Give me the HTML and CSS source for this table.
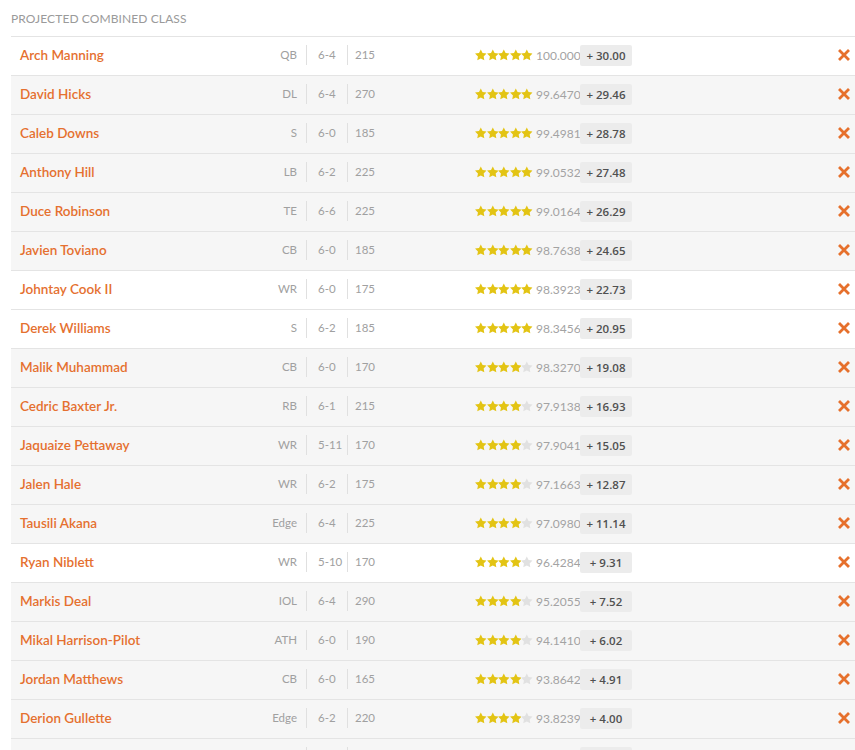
FILE: index.html
```html
<!DOCTYPE html>
<html>
<head>
<meta charset="utf-8">
<link rel="stylesheet" href="styles.css">
</head>
<body>
<svg class="defs" width="0" height="0" aria-hidden="true">
  <symbol id="star" viewBox="0 0 24 24"><path d="M12 .4l3.7 7.5 8.2 1.2-6 5.8 1.4 8.2L12 19.2 4.7 23.1l1.4-8.2-6-5.8 8.2-1.2z"/></symbol>
  <symbol id="x" viewBox="0 0 12 12"><path d="M2 2l8 8M10 2l-8 8" stroke="currentColor" stroke-width="2.8" stroke-linecap="square" fill="none"/></symbol>
</svg>
<div class="panel">
  <div class="title">PROJECTED COMBINED CLASS</div>
  <ul class="list">
    <li class="row white"><span class="name">Arch Manning</span><span class="pos">QB</span><span class="ht">6-4</span><span class="wt">215</span><span class="stars"><svg class="star on"><use href="#star"/></svg><svg class="star on"><use href="#star"/></svg><svg class="star on"><use href="#star"/></svg><svg class="star on"><use href="#star"/></svg><svg class="star on"><use href="#star"/></svg></span><span class="score">100.0000</span><span class="gain">+ 30.00</span><svg class="remove"><use href="#x"/></svg></li>
    <li class="row"><span class="name">David Hicks</span><span class="pos">DL</span><span class="ht">6-4</span><span class="wt">270</span><span class="stars"><svg class="star on"><use href="#star"/></svg><svg class="star on"><use href="#star"/></svg><svg class="star on"><use href="#star"/></svg><svg class="star on"><use href="#star"/></svg><svg class="star on"><use href="#star"/></svg></span><span class="score">99.6470</span><span class="gain">+ 29.46</span><svg class="remove"><use href="#x"/></svg></li>
    <li class="row"><span class="name">Caleb Downs</span><span class="pos">S</span><span class="ht">6-0</span><span class="wt">185</span><span class="stars"><svg class="star on"><use href="#star"/></svg><svg class="star on"><use href="#star"/></svg><svg class="star on"><use href="#star"/></svg><svg class="star on"><use href="#star"/></svg><svg class="star on"><use href="#star"/></svg></span><span class="score">99.4981</span><span class="gain">+ 28.78</span><svg class="remove"><use href="#x"/></svg></li>
    <li class="row"><span class="name">Anthony Hill</span><span class="pos">LB</span><span class="ht">6-2</span><span class="wt">225</span><span class="stars"><svg class="star on"><use href="#star"/></svg><svg class="star on"><use href="#star"/></svg><svg class="star on"><use href="#star"/></svg><svg class="star on"><use href="#star"/></svg><svg class="star on"><use href="#star"/></svg></span><span class="score">99.0532</span><span class="gain">+ 27.48</span><svg class="remove"><use href="#x"/></svg></li>
    <li class="row"><span class="name">Duce Robinson</span><span class="pos">TE</span><span class="ht">6-6</span><span class="wt">225</span><span class="stars"><svg class="star on"><use href="#star"/></svg><svg class="star on"><use href="#star"/></svg><svg class="star on"><use href="#star"/></svg><svg class="star on"><use href="#star"/></svg><svg class="star on"><use href="#star"/></svg></span><span class="score">99.0164</span><span class="gain">+ 26.29</span><svg class="remove"><use href="#x"/></svg></li>
    <li class="row"><span class="name">Javien Toviano</span><span class="pos">CB</span><span class="ht">6-0</span><span class="wt">185</span><span class="stars"><svg class="star on"><use href="#star"/></svg><svg class="star on"><use href="#star"/></svg><svg class="star on"><use href="#star"/></svg><svg class="star on"><use href="#star"/></svg><svg class="star on"><use href="#star"/></svg></span><span class="score">98.7638</span><span class="gain">+ 24.65</span><svg class="remove"><use href="#x"/></svg></li>
    <li class="row white"><span class="name">Johntay Cook II</span><span class="pos">WR</span><span class="ht">6-0</span><span class="wt">175</span><span class="stars"><svg class="star on"><use href="#star"/></svg><svg class="star on"><use href="#star"/></svg><svg class="star on"><use href="#star"/></svg><svg class="star on"><use href="#star"/></svg><svg class="star on"><use href="#star"/></svg></span><span class="score">98.3923</span><span class="gain">+ 22.73</span><svg class="remove"><use href="#x"/></svg></li>
    <li class="row white"><span class="name">Derek Williams</span><span class="pos">S</span><span class="ht">6-2</span><span class="wt">185</span><span class="stars"><svg class="star on"><use href="#star"/></svg><svg class="star on"><use href="#star"/></svg><svg class="star on"><use href="#star"/></svg><svg class="star on"><use href="#star"/></svg><svg class="star on"><use href="#star"/></svg></span><span class="score">98.3456</span><span class="gain">+ 20.95</span><svg class="remove"><use href="#x"/></svg></li>
    <li class="row"><span class="name">Malik Muhammad</span><span class="pos">CB</span><span class="ht">6-0</span><span class="wt">170</span><span class="stars"><svg class="star on"><use href="#star"/></svg><svg class="star on"><use href="#star"/></svg><svg class="star on"><use href="#star"/></svg><svg class="star on"><use href="#star"/></svg><svg class="star"><use href="#star"/></svg></span><span class="score">98.3270</span><span class="gain">+ 19.08</span><svg class="remove"><use href="#x"/></svg></li>
    <li class="row"><span class="name">Cedric Baxter Jr.</span><span class="pos">RB</span><span class="ht">6-1</span><span class="wt">215</span><span class="stars"><svg class="star on"><use href="#star"/></svg><svg class="star on"><use href="#star"/></svg><svg class="star on"><use href="#star"/></svg><svg class="star on"><use href="#star"/></svg><svg class="star"><use href="#star"/></svg></span><span class="score">97.9138</span><span class="gain">+ 16.93</span><svg class="remove"><use href="#x"/></svg></li>
    <li class="row"><span class="name">Jaquaize Pettaway</span><span class="pos">WR</span><span class="ht">5-11</span><span class="wt">170</span><span class="stars"><svg class="star on"><use href="#star"/></svg><svg class="star on"><use href="#star"/></svg><svg class="star on"><use href="#star"/></svg><svg class="star on"><use href="#star"/></svg><svg class="star"><use href="#star"/></svg></span><span class="score">97.9041</span><span class="gain">+ 15.05</span><svg class="remove"><use href="#x"/></svg></li>
    <li class="row"><span class="name">Jalen Hale</span><span class="pos">WR</span><span class="ht">6-2</span><span class="wt">175</span><span class="stars"><svg class="star on"><use href="#star"/></svg><svg class="star on"><use href="#star"/></svg><svg class="star on"><use href="#star"/></svg><svg class="star on"><use href="#star"/></svg><svg class="star"><use href="#star"/></svg></span><span class="score">97.1663</span><span class="gain">+ 12.87</span><svg class="remove"><use href="#x"/></svg></li>
    <li class="row"><span class="name">Tausili Akana</span><span class="pos">Edge</span><span class="ht">6-4</span><span class="wt">225</span><span class="stars"><svg class="star on"><use href="#star"/></svg><svg class="star on"><use href="#star"/></svg><svg class="star on"><use href="#star"/></svg><svg class="star on"><use href="#star"/></svg><svg class="star"><use href="#star"/></svg></span><span class="score">97.0980</span><span class="gain">+ 11.14</span><svg class="remove"><use href="#x"/></svg></li>
    <li class="row white"><span class="name">Ryan Niblett</span><span class="pos">WR</span><span class="ht">5-10</span><span class="wt">170</span><span class="stars"><svg class="star on"><use href="#star"/></svg><svg class="star on"><use href="#star"/></svg><svg class="star on"><use href="#star"/></svg><svg class="star on"><use href="#star"/></svg><svg class="star"><use href="#star"/></svg></span><span class="score">96.4284</span><span class="gain">+ 9.31</span><svg class="remove"><use href="#x"/></svg></li>
    <li class="row"><span class="name">Markis Deal</span><span class="pos">IOL</span><span class="ht">6-4</span><span class="wt">290</span><span class="stars"><svg class="star on"><use href="#star"/></svg><svg class="star on"><use href="#star"/></svg><svg class="star on"><use href="#star"/></svg><svg class="star on"><use href="#star"/></svg><svg class="star"><use href="#star"/></svg></span><span class="score">95.2055</span><span class="gain">+ 7.52</span><svg class="remove"><use href="#x"/></svg></li>
    <li class="row"><span class="name">Mikal Harrison-Pilot</span><span class="pos">ATH</span><span class="ht">6-0</span><span class="wt">190</span><span class="stars"><svg class="star on"><use href="#star"/></svg><svg class="star on"><use href="#star"/></svg><svg class="star on"><use href="#star"/></svg><svg class="star on"><use href="#star"/></svg><svg class="star"><use href="#star"/></svg></span><span class="score">94.1410</span><span class="gain">+ 6.02</span><svg class="remove"><use href="#x"/></svg></li>
    <li class="row"><span class="name">Jordan Matthews</span><span class="pos">CB</span><span class="ht">6-0</span><span class="wt">165</span><span class="stars"><svg class="star on"><use href="#star"/></svg><svg class="star on"><use href="#star"/></svg><svg class="star on"><use href="#star"/></svg><svg class="star on"><use href="#star"/></svg><svg class="star"><use href="#star"/></svg></span><span class="score">93.8642</span><span class="gain">+ 4.91</span><svg class="remove"><use href="#x"/></svg></li>
    <li class="row"><span class="name">Derion Gullette</span><span class="pos">Edge</span><span class="ht">6-2</span><span class="wt">220</span><span class="stars"><svg class="star on"><use href="#star"/></svg><svg class="star on"><use href="#star"/></svg><svg class="star on"><use href="#star"/></svg><svg class="star on"><use href="#star"/></svg><svg class="star"><use href="#star"/></svg></span><span class="score">93.8239</span><span class="gain">+ 4.00</span><svg class="remove"><use href="#x"/></svg></li>
    <li class="row"><span class="name">&nbsp;</span><span class="pos">&nbsp;</span><span class="ht">&nbsp;</span><span class="wt">&nbsp;</span><span class="stars"></span><span class="score">&nbsp;</span><span class="gain">&nbsp;</span></li>
  </ul>
</div>
</body>
</html>
```
FILE: styles.css
```css
* { box-sizing: border-box; }
html, body { margin: 0; padding: 0; background: #fff; }
body { font-family: "Lato", "Open Sans", sans-serif; color: #999; }
.defs { position: absolute; width: 0; height: 0; overflow: hidden; }
.panel { padding-left: 11px; }
.title {
  height: 37px;
  line-height: 37px;
  font-size: 12px;
  color: #9a9a9a;
  border-bottom: 1px solid #e4e4e4;
  letter-spacing: 0.1px;
}
.list { list-style: none; margin: 0; padding: 0; }
.row {
  display: flex;
  align-items: center;
  height: 39px;
  padding: 0 5px 2px 9px;
  border-bottom: 1px solid #e4e4e4;
  background: #f6f6f6;
}
.row.white { background: #fff; }
.name {
  width: 230px;
  flex: none;
  font-size: 13.5px;
  font-weight: 600;
  color: #e5702f;
  white-space: nowrap;
}
.pos, .ht, .wt {
  flex: none;
  height: 20px;
  line-height: 20px;
  font-size: 11.5px;
  color: #a0a0a0;
}
.pos { width: 57px; text-align: right; padding-right: 9px; border-right: 1px solid #e0e0e0; }
.ht { width: 41px; padding-left: 11px; border-right: 1px solid #e0e0e0; }
.wt { width: 127px; padding-left: 7px; }
.stars { flex: none; display: flex; width: 61px; }
.star { width: 11.6px; height: 12px; fill: #e1e1e1; flex: none; }
.star.on { fill: #e3c414; }
.score {
  flex: none;
  width: 44px;
  overflow: hidden;
  white-space: nowrap;
  font-size: 12px;
  color: #a3a3a3;
}
.gain {
  flex: none;
  width: 52px;
  height: 21px;
  line-height: 21px;
  text-align: center;
  background: #ececec;
  border-radius: 2px;
  font-family: "Open Sans", "Lato", sans-serif;
  font-size: 11.5px;
  font-weight: 600;
  color: #505050;
}
.remove {
  margin-left: auto;
  width: 12px;
  height: 12px;
  color: #e6702c;
  flex: none;
}
```
